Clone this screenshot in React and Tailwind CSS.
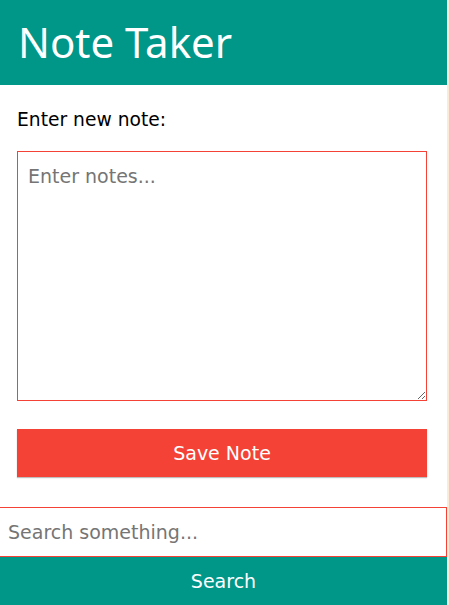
export default function App() {
    return (
        <div className="min-h-screen bg-[#faebd7] font-['DejaVu_Sans',sans-serif]">
            <div className="w-[447px] min-h-screen bg-white">
                <header className="h-[85px] bg-[#009688] flex items-center px-[18px]">
                    <h1 className="font-['Noto_Sans',sans-serif] text-[42px] leading-none text-white pb-[2px]">
                        Note Taker
                    </h1>
                </header>

                <div className="px-[17px] pt-[22px]">
                    <label className="block text-[18.7px] leading-[26px] text-black">Enter new note:</label>
                    <textarea
                        placeholder="Enter notes..."
                        className="mt-[18px] block w-[410px] h-[250px] border border-[#f44336] px-[10px] py-[10px] text-[19px] text-black placeholder:text-[#757575] outline-none"
                    />
                    <button className="mt-[28px] block w-[410px] h-[48px] bg-[#f44336] text-[19px] text-white shadow-[0_1px_1px_rgba(0,0,0,0.25)]">
                        Save Note
                    </button>
                </div>

                <input
                    type="text"
                    placeholder="Search something..."
                    className="mt-[30px] block w-[447px] h-[50px] border-y border-r border-[#f44336] px-2 text-[19px] text-black placeholder:text-[#757575] outline-none"
                />
                <button className="block w-[447px] h-[48px] bg-[#009688] text-[19px] text-white">
                    Search
                </button>
            </div>
        </div>
    );
}
